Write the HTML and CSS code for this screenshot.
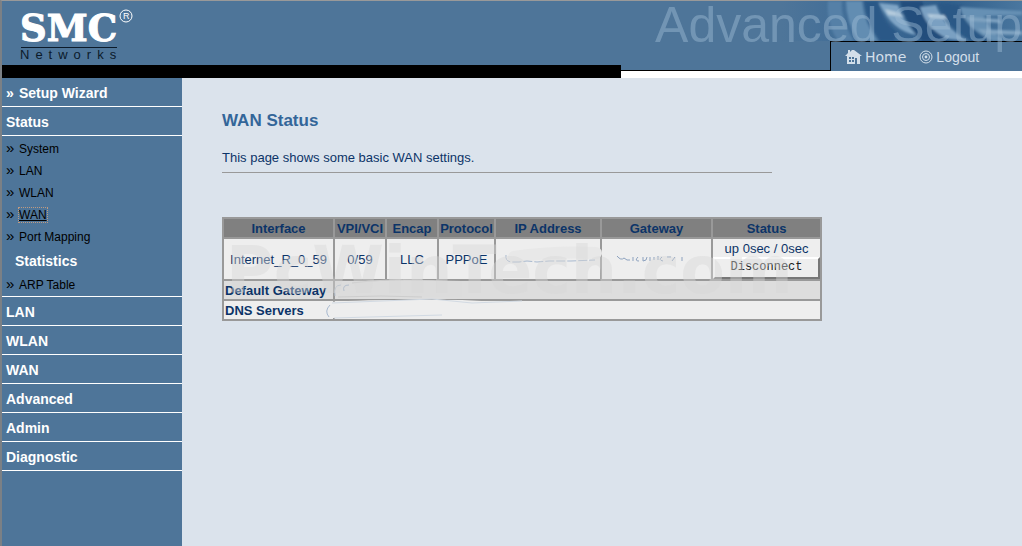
FILE: index.html
```
<!DOCTYPE html>
<html lang="en">
<head>
  <meta charset="UTF-8">
  <meta name="viewport" content="width=device-width, initial-scale=1.0">
  <title>SMC Networks - WAN Status</title>
  <link rel="stylesheet" href="styles.css">
</head>
<body>
  <header class="header">
    <div class="brand">
      <svg class="logo" width="130" height="60" viewBox="0 0 130 60" role="img" aria-label="SMC Networks">
        <text class="logo-name" x="10" y="36">SMC</text>
        <circle cx="116" cy="11" r="6" fill="none" stroke="#fff"/>
        <text class="logo-reg" x="113" y="14">R</text>
        <rect x="11" y="42" width="96" height="1" fill="#0b1a2a"/>
        <text class="logo-sub" x="10" y="54">Networks</text>
      </svg>
      <div class="black-bar"></div>
    </div>
    <div class="banner">
      <svg class="photo" width="300" height="40" viewBox="0 0 300 40" aria-hidden="true">
        <defs>
          <linearGradient id="fade" x1="0" x2="1">
            <stop offset="0.2" stop-color="#4e7599"/>
            <stop offset="0.45" stop-color="#3f6c97"/>
            <stop offset="0.75" stop-color="#2f5d8a"/>
            <stop offset="1" stop-color="#4a779f"/>
          </linearGradient>
          <filter id="soft"><feGaussianBlur stdDeviation="1"/></filter>
        </defs>
        <rect width="300" height="40" fill="url(#fade)"/>
        <g filter="url(#soft)">
          <path d="M106 0 L120 0 Q118 18 132 40 L116 40 Q104 22 106 0Z" fill="#5580a7"/>
          <path d="M124 0 L140 0 Q142 22 156 40 L136 40 Q124 20 124 0Z" fill="#628db2"/>
          <path d="M142 0 L156 0 Q160 20 176 32 L172 40 L158 40 Q144 20 142 0Z" fill="#2a5887"/>
          <path d="M157 2 L176 4 Q180 18 194 34 Q170 30 157 2Z" fill="#7fa5c6"/>
          <path d="M163 8 L178 12 L182 16 L166 14Z" fill="#b4cbdd"/>
          <path d="M178 0 L200 0 Q206 20 224 40 L200 40 Q184 24 178 0Z" fill="#204d7b"/>
          <path d="M198 6 Q204 28 226 38 L246 40 Q222 26 214 4Z" fill="#7aa0c2"/>
          <path d="M205 13 L222 14 L226 18 L208 17Z" fill="#b4cbdd"/>
          <path d="M216 2 L240 4 Q246 24 270 40 L250 40 Q224 24 216 2Z" fill="#2b5986"/>
          <path d="M238 6 L300 10 L300 14 L262 15 Q266 30 284 40 L270 40 Q242 26 238 6Z" fill="#6690b4"/>
          <path d="M244 16 L276 18 L280 22 L248 20Z M256 28 L300 30 L300 34 L262 33Z" fill="#7fa3c1"/>
        </g>
      </svg>
      <nav class="top-links">
        <a href="#"><svg width="17" height="16" viewBox="0 0 17 16" aria-hidden="true">
          <path d="M0 7 L3 4 V1 H5 V3 L7 1 H9 L17 7 H15 V15 H12 V9 H10 V15 H2 V7Z" fill="#d3dfea"/>
          <path d="M4 8 H6 V10 H4Z M7 8 H9 V10 H7Z M4 11 H6 V13 H4Z M7 11 H9 V13 H7Z" fill="#4e7599"/>
        </svg><span class="home-text">Home</span></a>
        <a href="#"><svg width="14" height="14" viewBox="0 0 14 14" aria-hidden="true">
          <circle cx="7" cy="7" r="6" fill="none" stroke="#d3dfea"/>
          <circle cx="7" cy="7" r="3.5" fill="none" stroke="#d3dfea"/>
          <circle cx="7" cy="7" r="1.4" fill="#d3dfea"/>
        </svg><span>Logout</span></a>
      </nav>
      <div class="banner-title">Advanced Setup</div>
    </div>
  </header>

  <div class="main">
    <nav class="sidebar">
      <a class="item" href="#"><span class="mark">»</span>Setup Wizard</a>
      <a class="item" href="#">Status</a>
      <ul class="submenu">
        <li><a href="#"><span class="mark">»</span><span>System</span></a></li>
        <li><a href="#"><span class="mark">»</span><span>LAN</span></a></li>
        <li><a href="#"><span class="mark">»</span><span>WLAN</span></a></li>
        <li><a href="#"><span class="mark">»</span><span class="current">WAN</span></a></li>
        <li><a href="#"><span class="mark">»</span><span>Port Mapping</span></a></li>
        <li class="subhead">Statistics</li>
        <li><a href="#"><span class="mark">»</span><span>ARP Table</span></a></li>
      </ul>
      <a class="item" href="#">LAN</a>
      <a class="item" href="#">WLAN</a>
      <a class="item" href="#">WAN</a>
      <a class="item" href="#">Advanced</a>
      <a class="item" href="#">Admin</a>
      <a class="item" href="#">Diagnostic</a>
    </nav>

    <main class="content">
      <h1>WAN Status</h1>
      <p class="intro">This page shows some basic WAN settings.</p>
      <div class="table-wrap">
        <table class="status-table">
          <colgroup>
            <col class="c-if"><col class="c-sm"><col class="c-sm"><col class="c-proto"><col class="c-ip"><col class="c-if"><col class="c-status">
          </colgroup>
          <tr><th>Interface</th><th>VPI/VCI</th><th>Encap</th><th>Protocol</th><th>IP Address</th><th>Gateway</th><th>Status</th></tr>
          <tr>
            <td>Internet_R_0_59</td><td>0/59</td><td>LLC</td><td>PPPoE</td><td></td><td></td>
            <td>up 0sec / 0sec<button type="button" class="disconnect">Disconnect</button></td>
          </tr>
          <tr class="alt"><th scope="row">Default Gateway</th><td colspan="6"></td></tr>
          <tr class="plain"><th scope="row">DNS Servers</th><td colspan="6"></td></tr>
        </table>
        <!-- hidden addresses -->
        <svg class="smears" width="600" height="104" viewBox="0 0 600 104" aria-hidden="true">
          <path d="M116 66 Q160 61 240 64 V80 H116 Q110 73 116 66Z" fill="#dcdcdc"/>
          <path d="M108 85 Q150 82 240 83 L300 86 V98 L240 101 H110 Q102 94 108 85Z" fill="#eeeeee"/>
          <path d="M113 79 Q111 68 119 68 M122 74 q-2 -6 5 -6" fill="none" stroke="#b4bfcd"/>
          <path d="M116 80 Q160 78 200 80 M130 66 Q160 62 200 63" fill="none" stroke="#cdcdcd"/>
          <path d="M107 100 Q102 94 108 88" fill="none" stroke="#a9bad0"/>
          <path d="M110 86 L210 82 L250 86 L300 84 M112 101 L220 98" fill="none" stroke="#d2dae3"/>
          <path d="M292 40 Q330 34 374 36" fill="none" stroke="#e8e8e8" stroke-width="12" stroke-linecap="round"/>
          <path d="M284 38 q-1 6 5 7 h8 l8 -1 l10 1 l12 -1 h22 l24 -1" fill="none" stroke="#a9bad0" stroke-dasharray="9 2"/>
          <path d="M395 39 q4 5 7 2 q3 3 6 2 m3 -3 v4 m5 -4 q-4 4 1 4 m4 -4 v4 q4 0 4 -4 m3 0 v4 m4 -4 v3 m4 -4 v4 m4 -3 q-4 3 1 4 m4 -4 h4 m4 0 l-3 4 m10 -4 v4" fill="none" stroke="#8da2bf"/>
        </svg>
        <div class="watermark">PcWinTech.com</div>
      </div>
    </main>
  </div>
</body>
</html>
```
FILE: styles.css
```
* {
  box-sizing: border-box;
}
body {
  margin: 0;
  min-height: 100vh;
  display: flex;
  flex-direction: column;
  font-family: "Liberation Sans", Arial, sans-serif;
  font-size: 13px;
  color: #0c3468;
  background: #dbe3ec;
  border-top: 1px solid #999;
  border-left: 2px solid #7b8085;
}
a {
  color: inherit;
  text-decoration: none;
}

/* header */
.header {
  display: flex;
  height: 77px;
  background: #4e7599;
}
.brand {
  width: 619px;
  flex: none;
  display: flex;
  flex-direction: column;
  justify-content: space-between;
}
.logo {
  margin: 4px 0 0 8px;
}
.logo-name {
  font: bold 37px "DejaVu Serif", serif;
  fill: #fff;
  stroke: #fff;
  stroke-width: 1px;
}
.logo-reg {
  font-size: 9px;
  fill: #fff;
}
.logo-sub {
  font-size: 13px;
  letter-spacing: 6px;
  fill: #0b1a2a;
}
.black-bar {
  height: 13px;
  background: #000;
}
.banner {
  flex: 1;
  position: relative;
  display: flex;
  align-items: flex-end;
  justify-content: flex-end;
  border-bottom: 7px solid #fff;
  overflow: hidden;
}
.banner::before {
  content: "";
  flex: 1;
  border-bottom: 1px solid #000;
}
.photo {
  position: absolute;
  top: 0;
  right: 0;
}
.banner-title {
  position: absolute;
  top: -6px;
  right: 0;
  font-size: 50px;
  line-height: 60px;
  white-space: nowrap;
  color: rgba(160, 188, 212, 0.45);
  pointer-events: none;
}
.top-links {
  position: relative;
  width: 192px;
  height: 30px;
  padding-left: 14px;
  display: flex;
  align-items: center;
  gap: 13px;
  border-top: 1px solid #000;
  border-left: 1px solid #000;
  background: #4e7599;
  color: #d3dfea;
  font-size: 14px;
}
.top-links a {
  display: flex;
  align-items: center;
  gap: 3px;
}
.home-text {
  font-family: "DejaVu Sans", sans-serif;
}

/* left menu */
.main {
  flex: 1;
  display: flex;
}
.sidebar {
  width: 180px;
  flex: none;
  background: #4e7599;
  color: #fff;
}
.item {
  display: block;
  height: 29px;
  padding-left: 4px;
  line-height: 30px;
  font-size: 14px;
  font-weight: bold;
  border-bottom: 1px solid #fff;
}
.mark {
  display: inline-block;
  width: 13px;
  line-height: 16px;
}
.submenu {
  margin: 0;
  padding: 2px 0 0 4px;
  list-style: none;
  font-size: 12px;
  line-height: 22px;
  color: #000;
  border-bottom: 1px solid #fff;
}
.submenu .mark {
  font-size: 15px;
}
.submenu .current {
  text-decoration: underline;
  outline: 1px dotted #c09a80;
}
.submenu .subhead {
  padding-left: 9px;
  line-height: 26px;
  font-size: 14px;
  font-weight: bold;
  color: #fff;
}

/* page */
.content {
  flex: 1;
  padding: 33px 40px;
}
h1 {
  margin: 0;
  font-size: 17px;
  line-height: 20px;
  color: #336699;
}
.intro {
  max-width: 550px;
  margin: 18px 0 44px;
  padding-bottom: 5px;
  line-height: 18px;
  border-bottom: 1px solid #999;
}
.table-wrap {
  position: relative;
  width: 600px;
}
.status-table {
  width: 100%;
  table-layout: fixed;
  border-collapse: collapse;
}
.status-table th,
.status-table td {
  height: 20px;
  padding: 1px 0 0;
  line-height: 17px;
  text-align: center;
  white-space: nowrap;
  border: 2px solid #999;
}
.status-table th {
  background: #808080;
}
.status-table td,
.status-table .plain th {
  background: #eee;
}
.status-table .alt th,
.status-table .alt td {
  background: #ddd;
}
.status-table th[scope="row"] {
  padding-left: 1px;
  text-align: left;
}
.c-if { width: 111px; }
.c-sm { width: 52px; }
.c-proto { width: 57px; }
.c-ip { width: 106px; }
.c-status { width: 109px; }
.disconnect {
  display: block;
  width: 100%;
  height: 22px;
  padding: 0 0 2px;
  font-family: "Liberation Mono", monospace;
  font-size: 12px;
  color: #222;
  background: #eee;
  border: 2px solid;
  border-color: #fff #777 #777 #fff;
}
.smears {
  position: absolute;
  top: 0;
  left: 0;
}
.watermark {
  position: absolute;
  top: 16px;
  left: 4px;
  font: bold 65px/75px "DejaVu Sans", sans-serif;
  color: rgba(214, 214, 214, 0.42);
  pointer-events: none;
}
```
